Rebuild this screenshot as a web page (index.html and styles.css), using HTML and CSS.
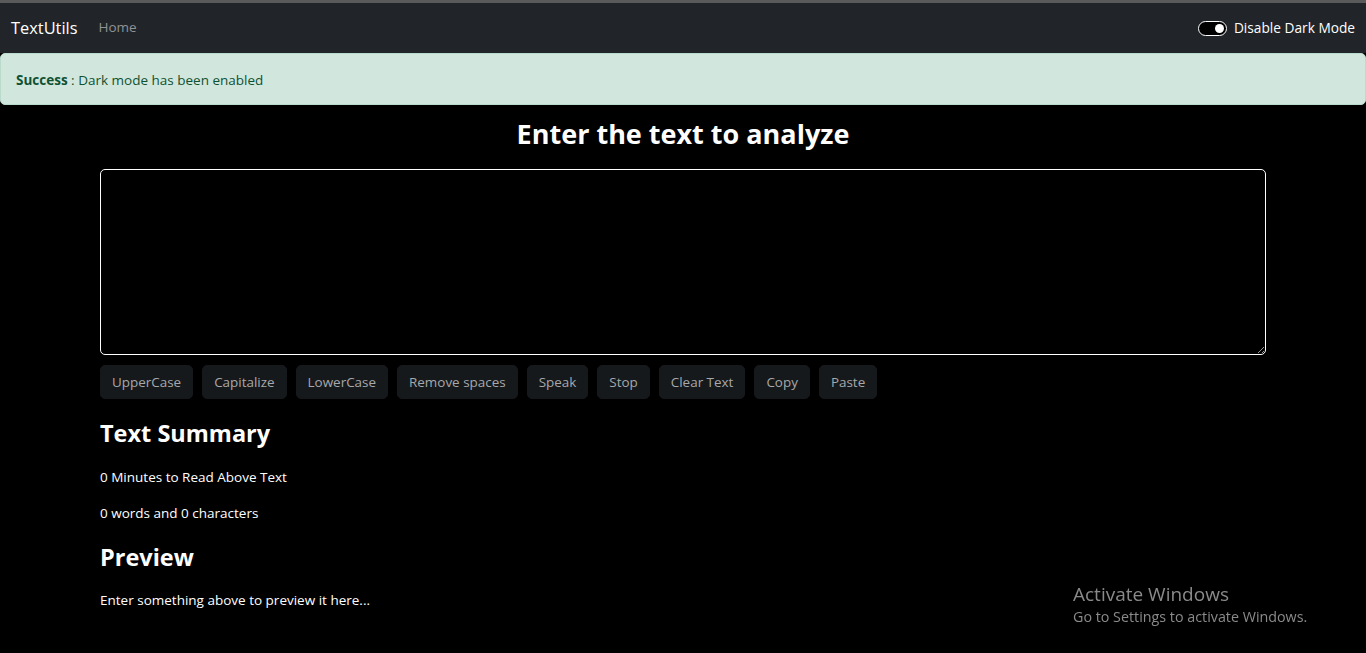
FILE: index.html
```html
<!DOCTYPE html>
<html lang="en">
<head>
<meta charset="utf-8">
<title>TextUtils</title>
<link rel="stylesheet" href="styles.css">
</head>
<body>
<div class="topline"></div>
<nav class="navbar">
  <a class="brand" href="#">TextUtils</a>
  <a class="nav-link" href="#">Home</a>
  <div class="spacer"></div>
  <label class="switch">
    <span class="switch-track"><span class="switch-knob"></span></span>
    <span class="switch-label">Disable Dark Mode</span>
  </label>
</nav>
<div class="alert"><strong>Success</strong> : Dark mode has been enabled</div>
<main class="container">
  <h1 class="title">Enter the text to analyze</h1>
  <textarea class="textbox" rows="8"></textarea>
  <div class="buttons">
    <button class="btn" disabled>UpperCase</button>
    <button class="btn" disabled>Capitalize</button>
    <button class="btn" disabled>LowerCase</button>
    <button class="btn" disabled>Remove spaces</button>
    <button class="btn" disabled>Speak</button>
    <button class="btn" disabled>Stop</button>
    <button class="btn" disabled>Clear Text</button>
    <button class="btn" disabled>Copy</button>
    <button class="btn" disabled>Paste</button>
  </div>
  <section class="summary">
    <h2 class="subtitle">Text Summary</h2>
    <p class="line">0 Minutes to Read Above Text</p>
    <p class="line">0 words and 0 characters</p>
    <h2 class="subtitle preview">Preview</h2>
    <p class="line">Enter something above to preview it here...</p>
  </section>
</main>
<div class="watermark">
  <div class="wm-title">Activate Windows</div>
  <div class="wm-sub">Go to Settings to activate Windows.</div>
</div>
</body>
</html>
```
FILE: styles.css
```css
* { box-sizing: border-box; }
html, body { margin: 0; padding: 0; }
body {
  background: #000;
  color: #fff;
  font-family: "Open Sans", "Noto Sans", sans-serif;
  font-size: 13.5px;
  line-height: 21.6px;
  height: 653px;
  overflow: hidden;
}
.topline { height: 3px; background: #5a5a5a; }
.navbar {
  height: 50px;
  background: #212529;
  display: flex;
  align-items: center;
  padding: 0 11px;
}
.brand {
  color: #fff;
  text-decoration: none;
  font-size: 16.4px;
  margin-right: 14px;
}
.nav-link {
  color: #909295;
  text-decoration: none;
  padding: 0 7px;
  font-size: 13.5px;
}
.spacer { flex: 1; }
.switch { display: flex; align-items: center; gap: 7px; }
.switch-track {
  width: 29px;
  height: 15px;
  border: 1.5px solid #fff;
  border-radius: 8px;
  background: #000;
  display: flex;
  align-items: center;
  justify-content: flex-end;
  padding-right: 2px;
}
.switch-knob {
  width: 9px;
  height: 9px;
  border-radius: 50%;
  background: #fff;
}
.switch-label { color: #fff; font-size: 13.7px; }
.alert {
  height: 52px;
  background: #d1e7dd;
  border: 1px solid #badbcc;
  border-radius: 5px;
  color: #0f5132;
  padding: 16px 15px 0;
  font-size: 13.5px;
}
.alert strong { font-weight: 700; }
.container { width: 1166px; margin: 0 auto; }
.title {
  margin: 12px 0 18px;
  text-align: center;
  font-size: 27px;
  line-height: 34px;
  font-weight: 700;
}
.textbox {
  display: block;
  width: 100%;
  height: 186px;
  background: #000;
  border: 1px solid #fff;
  border-radius: 5px;
  color: #fff;
  margin: 0;
}
.buttons { display: flex; gap: 9px; margin-top: 10px; }
.btn {
  height: 34px;
  padding: 0 11px;
  background: #16191c;
  color: #a7a8aa;
  border: 1px solid #16191c;
  border-radius: 5px;
  font-family: inherit;
  font-size: 13.45px;
}
.summary { margin-top: 19px; }
.subtitle {
  margin: 0 0 19px;
  font-size: 23.5px;
  line-height: 30px;
  font-weight: 700;
}
.subtitle.preview { margin-top: 17px; margin-bottom: 18px; }
.line { margin: 0 0 14.4px; }
.watermark {
  position: fixed;
  left: 1073px;
  top: 581px;
  color: #8a8a8a;
}
.wm-title { font-size: 19px; line-height: 26px; }
.wm-sub { font-size: 14.3px; line-height: 20px; }
```
